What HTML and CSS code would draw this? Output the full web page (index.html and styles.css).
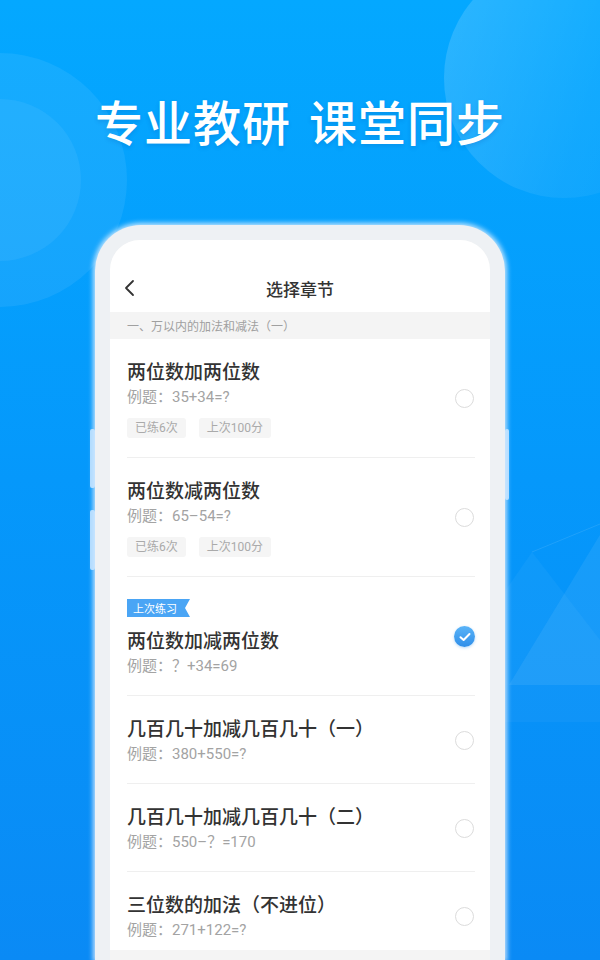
FILE: index.html
```html
<!DOCTYPE html>
<html lang="zh-CN">
<head>
  <meta charset="UTF-8">
  <title>选择章节</title>
  <link rel="stylesheet" href="styles.css">
</head>
<body>

  <div class="stage">
    <!-- background decoration -->
    <div class="blob blob-left-outer"></div>
    <div class="blob blob-left-inner"></div>
    <div class="blob blob-right"></div>
    <svg class="shards" width="600" height="960" viewBox="0 0 600 960">
      <polygon points="532,552 440,685 600,685 600,640" fill="#ffffff" fill-opacity="0.04"/>
      <polygon points="612,515 509,685 600,685" fill="#ffffff" fill-opacity="0.07"/>
      <rect x="500" y="685" width="100" height="37" fill="#ffffff" fill-opacity="0.035"/>
      <line x1="532" y1="552" x2="600" y2="524" stroke="#ffffff" stroke-opacity="0.1" stroke-width="1"/>
    </svg>

    <h1 class="headline"><span>专业教研</span><span>课堂同步</span></h1>

    <div class="phone">
      <i class="side-key key-l1"></i>
      <i class="side-key key-l2"></i>
      <i class="side-key key-r1"></i>

      <div class="screen">
        <div class="navbar">
          <svg class="back" width="12" height="18" viewBox="0 0 12 18">
            <polyline points="9,2 2,9 9,16" fill="none" stroke="#333" stroke-width="1.8" stroke-linecap="round" stroke-linejoin="round"/>
          </svg>
          <span class="nav-title">选择章节</span>
        </div>

        <div class="section-head">一、万以内的加法和减法（一）</div>

        <ul class="chapters">
          <li class="chapter">
            <div class="chapter-body">
              <div class="chapter-title">两位数加两位数</div>
              <div class="chapter-example">例题：35+34=?</div>
              <div class="tags">
                <span class="tag">已练6次</span>
                <span class="tag">上次100分</span>
              </div>
            </div>
            <span class="radio"></span>
          </li>
          <li class="chapter">
            <div class="chapter-body">
              <div class="chapter-title">两位数减两位数</div>
              <div class="chapter-example">例题：65–54=?</div>
              <div class="tags">
                <span class="tag">已练6次</span>
                <span class="tag">上次100分</span>
              </div>
            </div>
            <span class="radio"></span>
          </li>
          <li class="chapter">
            <div class="chapter-body">
              <span class="ribbon">上次练习</span>
              <div class="chapter-title">两位数加减两位数</div>
              <div class="chapter-example">例题：？+34=69</div>
            </div>
            <span class="radio checked">
              <svg width="12" height="10" viewBox="0 0 12 10">
                <polyline points="1.5,5.2 4.6,8 10.5,2" fill="none" stroke="#fff" stroke-width="2" stroke-linecap="round" stroke-linejoin="round"/>
              </svg>
            </span>
          </li>
          <li class="chapter">
            <div class="chapter-body">
              <div class="chapter-title">几百几十加减几百几十（一）</div>
              <div class="chapter-example">例题：380+550=?</div>
            </div>
            <span class="radio"></span>
          </li>
          <li class="chapter">
            <div class="chapter-body">
              <div class="chapter-title">几百几十加减几百几十（二）</div>
              <div class="chapter-example">例题：550–？=170</div>
            </div>
            <span class="radio"></span>
          </li>
          <li class="chapter last">
            <div class="chapter-body">
              <div class="chapter-title">三位数的加法（不进位）</div>
              <div class="chapter-example">例题：271+122=?</div>
            </div>
            <span class="radio"></span>
          </li>
        </ul>
      </div>
    </div>
  </div>

</body>
</html>
```

FILE: styles.css
```css
body { margin: 0; font-family: "Noto Sans CJK SC", "Noto Sans", sans-serif; }
.stage { position: relative; width: 600px; height: 960px; overflow: hidden; background: linear-gradient(180deg, #04a8ff 0%, #0598fb 50%, #0a8af5 100%); }

.blob { position: absolute; border-radius: 50%; }
.blob-left-outer { left: -127px; top: 53px; width: 254px; height: 254px; background: rgba(255, 255, 255, 0.07); }
.blob-left-inner { left: -81px; top: 99px; width: 162px; height: 162px; background: rgba(255, 255, 255, 0.06); }
.blob-right { left: 444px; top: -42px; width: 240px; height: 240px; background: linear-gradient(110deg, rgba(255, 255, 255, 0.17) 0%, rgba(255, 255, 255, 0.06) 60%, rgba(255, 255, 255, 0.02) 100%); }
.shards { position: absolute; left: 0; top: 0; }

.headline { position: relative; margin: 0; padding-top: 92px; height: 56px; display: flex; justify-content: center; gap: 18px; color: #fff; font-size: 48px; line-height: 56px; font-weight: 500; letter-spacing: 1px; text-shadow: 0 2px 4px rgba(0, 40, 120, 0.15); }

.phone { position: relative; width: 380px; margin: 77px auto 0; padding: 15px 15px 0; height: 720px; background: #eef1f4; border-radius: 46px 46px 0 0; box-shadow: 0 0 5px 2px rgba(225, 240, 255, 0.85); }
.side-key { position: absolute; display: block; background: rgba(205, 230, 255, 0.85); border-radius: 2px; }
.key-l1 { left: -5px; top: 204px; width: 5px; height: 59px; }
.key-l2 { left: -5px; top: 285px; width: 5px; height: 60px; }
.key-r1 { right: -4px; top: 204px; width: 4px; height: 71px; }

.screen { height: 720px; background: #f4f4f4; border-radius: 30px 30px 0 0; overflow: hidden; }
.navbar { position: relative; height: 48px; padding-top: 24px; background: #fff; display: flex; align-items: center; justify-content: center; }
.back { position: absolute; left: 14px; top: 39px; }
.nav-title { font-size: 17px; color: #333; font-weight: 500; }

.section-head { height: 27px; line-height: 27px; padding-left: 17px; font-size: 12px; color: #a0a0a0; background: #f4f4f4; }

.chapters { list-style: none; margin: 0; padding: 0 15px 0 17px; background: #fff; }
.chapter { display: flex; align-items: center; justify-content: space-between; padding: 20px 0 19px; border-bottom: 1px solid #efefef; }
.chapter.last { border-bottom: none; padding-bottom: 10px; }
.chapter-body { display: flex; flex-direction: column; align-items: flex-start; }
.chapter-title { height: 24px; font-size: 19px; line-height: 24px; color: #333; font-weight: 500; }
.chapter-example { height: 20px; margin-top: 4px; font-family: Roboto, "Noto Sans CJK SC", sans-serif; font-size: 15px; line-height: 20px; color: #a3a3a3; }
.tags { display: flex; gap: 13px; margin-top: 11px; }
.tag { height: 20px; line-height: 20px; padding: 0 8px; font-family: Roboto, "Noto Sans CJK SC", sans-serif; font-size: 12px; color: #aaa; background: #f5f5f5; border-radius: 3px; }
.ribbon { margin: 2px 0 11px; height: 18px; line-height: 18px; padding: 0 13px 0 6px; font-size: 11px; color: #fff; background: #4aa5f5; clip-path: polygon(0 0, 100% 0, calc(100% - 5px) 50%, 100% 100%, 0 100%); }

.radio { width: 17px; height: 17px; border: 1.5px solid #dcdcdc; border-radius: 50%; margin-right: 1px; }
.radio.checked { width: 21px; height: 21px; border: none; display: flex; align-items: center; justify-content: center; background: linear-gradient(180deg, #5ab4f8, #2f8ee9); box-shadow: 0 1px 3px rgba(47, 142, 233, 0.35); margin-right: 0; }
```
